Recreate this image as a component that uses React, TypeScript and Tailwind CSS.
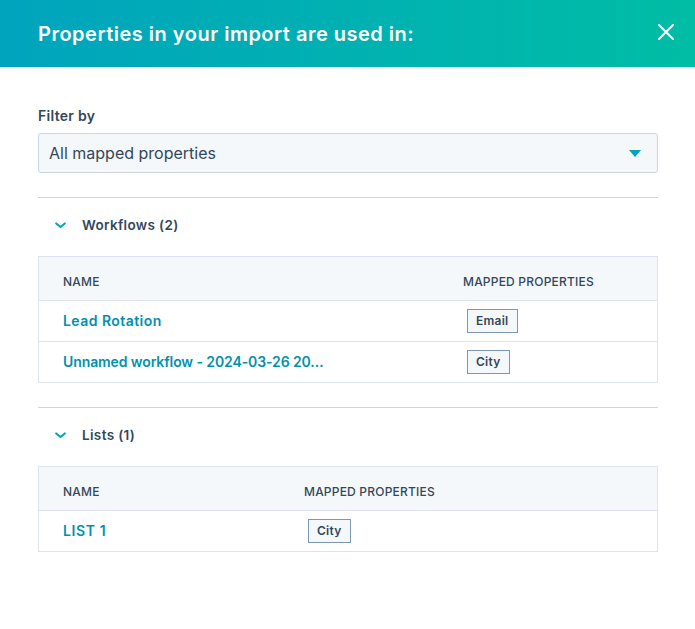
const font = "font-['Inter','Liberation_Sans',sans-serif]";

type Row = { name: string; tag: string; spacing: string };

const Tag = ({ children }: { children: string }) => (
  <span className="ml-1 inline-flex h-6 items-center border border-[#7c98b6] bg-[#f5f8fa] px-2 text-[12px] leading-none font-semibold tracking-[0.25px] text-[#33475b]">
    {children}
  </span>
);

const Section = ({
  title,
  cols,
  rows,
}: {
  title: string;
  cols: string;
  rows: Row[];
}) => (
  <div className="border-t border-[#cbd6e2]">
    <div className="flex h-[58px] items-center pb-1 pl-[17px]">
      <svg width="11" height="7" viewBox="0 0 11 7" fill="none" className="mt-px">
        <path d="M1.2 1.4 5.5 5l4.3-3.6" stroke="#00a4bd" strokeWidth="2" strokeLinecap="round" />
      </svg>
      <span className="ml-4 text-[13.5px] font-semibold tracking-[0.35px] text-[#33475b]">{title}</span>
    </div>
    <div className="border border-[#dfe3eb]">
      <div className={`grid h-[44px] items-center border-b border-[#dfe3eb] bg-[#f5f8fa] pt-[6px] text-[12px] font-medium tracking-[0.2px] text-[#33475b] ${cols}`}>
        <div className="pl-6">NAME</div>
        <div className="pl-6">MAPPED PROPERTIES</div>
      </div>
      {rows.map((r, i) => (
        <div
          key={r.name}
          className={`grid items-center pb-0.5 ${cols} ${i < rows.length - 1 ? "h-[41px] border-b border-[#dfe3eb]" : "h-[40px]"}`}
        >
          <a className={`pl-6 text-[14px] font-semibold text-[#0091ae] ${r.spacing}`}>{r.name}</a>
          <div className="pl-6">
            <Tag>{r.tag}</Tag>
          </div>
        </div>
      ))}
    </div>
  </div>
);

export default function App() {
  return (
    <div className={`h-[629px] w-[695px] overflow-hidden bg-white ${font}`}>
      <div className="flex h-[67px] items-center justify-between bg-gradient-to-r from-[#00a4bd] to-[#00bda5] pr-5 pl-[38px]">
        <h1 className="text-[20px] font-semibold tracking-[0.5px] text-white">Properties in your import are used in:</h1>
        <svg width="18" height="18" viewBox="0 0 18 18" fill="none" className="-mt-1">
          <path d="M2 2l14 14M16 2 2 16" stroke="#fff" strokeWidth="2" strokeLinecap="round" />
        </svg>
      </div>
      <div className="pt-10 pr-[37px] pl-[38px]">
        <label className="block text-[14px] leading-[18px] font-semibold tracking-[0.3px] text-[#33475b]">Filter by</label>
        <div className="mt-[8px] flex h-10 items-center justify-between rounded-[3px] border border-[#cbd6e2] bg-[#f5f8fa] pr-4 pl-[10px]">
          <span className="text-[16px] text-[#33475b]">All mapped properties</span>
          <svg width="12" height="7" viewBox="0 0 12 7">
            <path d="M0 0h12L6 7z" fill="#00a4bd" />
          </svg>
        </div>
        <div className="mt-6 flex flex-col gap-6">
          <Section
            title="Workflows (2)"
            cols="grid-cols-[400px_1fr]"
            rows={[
              { name: "Lead Rotation", tag: "Email", spacing: "tracking-[0.45px]" },
              { name: "Unnamed workflow - 2024-03-26 20…", tag: "City", spacing: "tracking-[-0.1px]" },
            ]}
          />
          <Section
            title="Lists (1)"
            cols="grid-cols-[241px_1fr]"
            rows={[{ name: "LIST 1", tag: "City", spacing: "tracking-[0.6px]" }]}
          />
        </div>
      </div>
    </div>
  );
}
